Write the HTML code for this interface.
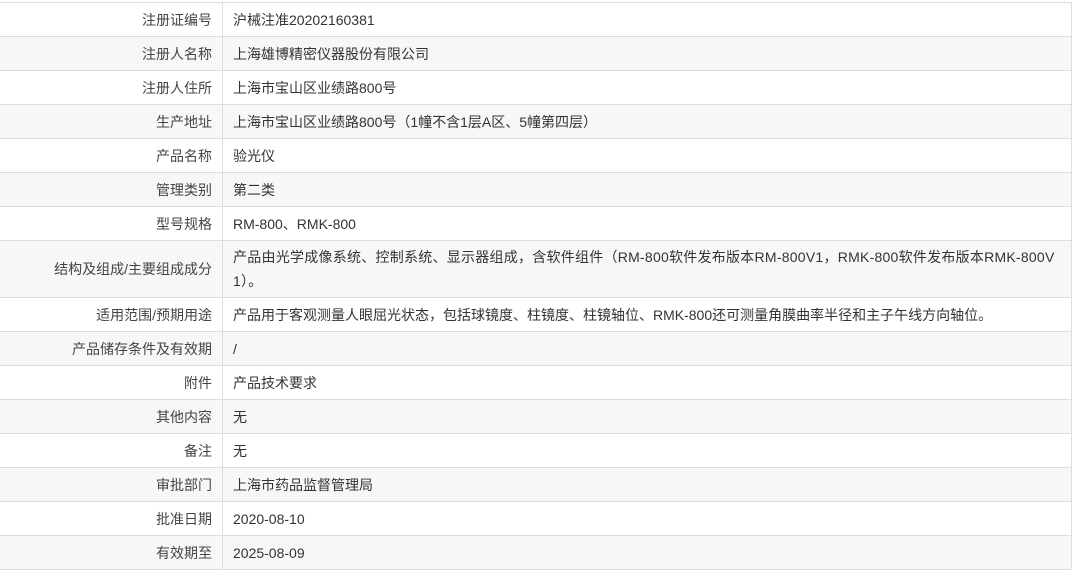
<!DOCTYPE html>
<html><head><meta charset="utf-8"><style>
html,body{margin:0;padding:0;background:#fff;width:1074px;height:570px;overflow:hidden}
.t{position:absolute;left:0;top:2px;width:1071px;border-top:1px solid #ddd;border-right:1px solid #ddd;font-family:"Liberation Sans","Noto Sans CJK SC",sans-serif;font-size:14px;color:#333}
.r{display:flex;height:33px;border-bottom:1px solid #ddd}
.r:nth-child(even){background:#f7f7f7}
.l{width:212px;padding-right:10px;border-right:1px solid #ddd;text-align:right;color:#444;display:flex;align-items:center;justify-content:flex-end}
.v{flex:1;padding:0 10px;display:flex;align-items:center;line-height:24px}
.r.tall{height:56px}
</style></head><body>
<div class="t">
<div class="r"><div class="l">注册证编号</div><div class="v">沪械注准20202160381</div></div>
<div class="r"><div class="l">注册人名称</div><div class="v">上海雄博精密仪器股份有限公司</div></div>
<div class="r"><div class="l">注册人住所</div><div class="v">上海市宝山区业绩路800号</div></div>
<div class="r"><div class="l">生产地址</div><div class="v">上海市宝山区业绩路800号（1幢不含1层A区、5幢第四层）</div></div>
<div class="r"><div class="l">产品名称</div><div class="v">验光仪</div></div>
<div class="r"><div class="l">管理类别</div><div class="v">第二类</div></div>
<div class="r"><div class="l">型号规格</div><div class="v">RM-800、RMK-800</div></div>
<div class="r tall"><div class="l">结构及组成/主要组成成分</div><div class="v" style="letter-spacing:0.25px">产品由光学成像系统、控制系统、显示器组成，含软件组件（RM-800软件发布版本RM-800V1，RMK-800软件发布版本RMK-800V<br>1）。</div></div>
<div class="r"><div class="l">适用范围/预期用途</div><div class="v">产品用于客观测量人眼屈光状态，包括球镜度、柱镜度、柱镜轴位、RMK-800还可测量角膜曲率半径和主子午线方向轴位。</div></div>
<div class="r"><div class="l">产品储存条件及有效期</div><div class="v">/</div></div>
<div class="r"><div class="l">附件</div><div class="v">产品技术要求</div></div>
<div class="r"><div class="l">其他内容</div><div class="v">无</div></div>
<div class="r"><div class="l">备注</div><div class="v">无</div></div>
<div class="r"><div class="l">审批部门</div><div class="v">上海市药品监督管理局</div></div>
<div class="r"><div class="l">批准日期</div><div class="v">2020-08-10</div></div>
<div class="r"><div class="l">有效期至</div><div class="v">2025-08-09</div></div>
</div>
</body></html>
